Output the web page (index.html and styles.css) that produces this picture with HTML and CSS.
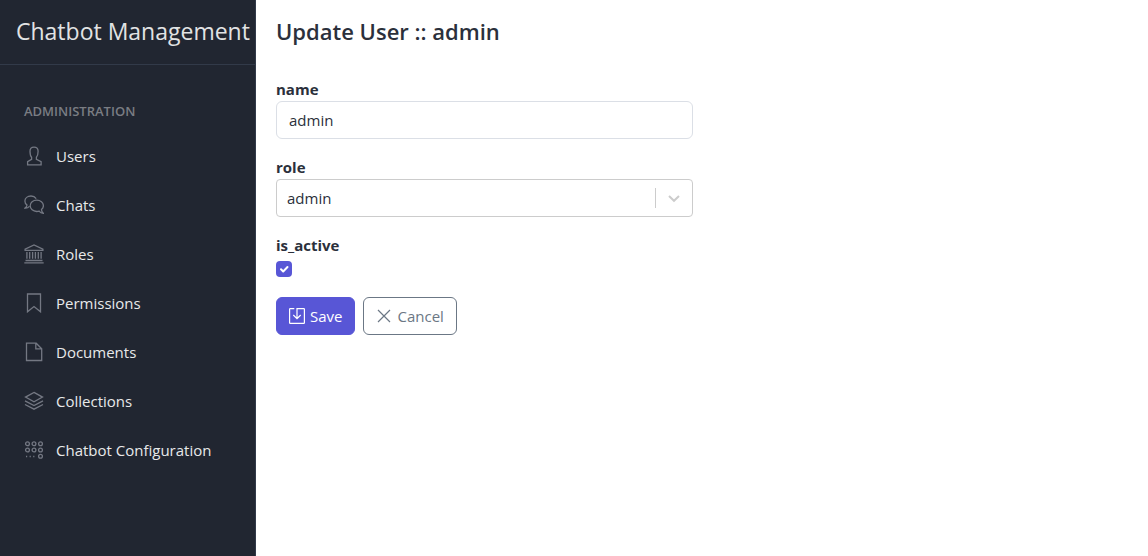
FILE: index.html
```html
<!DOCTYPE html>
<html lang="en">
<head>
<meta charset="utf-8">
<meta name="viewport" content="width=device-width, initial-scale=1">
<title>Update User</title>
<link rel="stylesheet" href="styles.css">
</head>
<body class="app">
<aside class="sidebar">
  <div class="brand">Chatbot Management</div>
  <nav class="nav">
    <h2 class="nav-title">Administration</h2>
    <a class="nav-link" href="#users"><svg class="icon" viewBox="0 0 20 20"><path d="M3.600 18.900v-3.200l4-2.300v-2.200C6.400 10 6 7.600 6 5.200 6 2.500 7.500 1.100 10 1.100s4.100 1.400 4.100 4.100c0 2.400-.5 4.800-1.700 6v2.200l4.700 2.300v3.200z"/></svg>Users</a>
    <a class="nav-link" href="#chats"><svg class="icon" viewBox="0 0 20 20"><path d="M12.200 3.600C11 1.900 9.200 1 7 1 3.600 1 .9 3.100.9 6c0 1.700.8 3.100 2.100 4.100 0 1.200-.8 2.200-1.900 3 1.700.1 3.200-.5 4.300-1.700M12.700 5.200c-3.600 0-6.500 2.400-6.500 5.600s2.900 5.700 6.500 5.700c.9 0 1.700-.1 2.400-.4 1 1.400 2.500 2.200 4.200 2.200-1.200-1.100-1.900-2.400-1.800-3.700 1.200-1 1.900-2.300 1.900-3.800 0-3.200-3-5.600-6.700-5.600z"/></svg>Chats</a>
    <a class="nav-link" href="#roles"><svg class="icon" viewBox="0 0 20 20"><path d="M1.100 6.300V5.200L10 1l8.900 4.200v1.100zM1.500 16.500h17M.3 18.900h19.400M2.900 8v6.800M5.700 8v6.800M8.600 8v6.800M11.400 8v6.800M14.300 8v6.800M17.100 8v6.800"/></svg>Roles</a>
    <a class="nav-link" href="#permissions"><svg class="icon" viewBox="0 0 20 20"><path d="M3.500 1h13v17.800L10 13.500l-6.500 5.300z"/></svg>Permissions</a>
    <a class="nav-link" href="#documents"><svg class="icon" viewBox="0 0 20 20"><path d="M2.500 1.200h9.700l5.500 5.500v11.800H2.500zM11.800 1.200v5.700h5.900"/></svg>Documents</a>
    <a class="nav-link" href="#collections"><svg class="icon" viewBox="0 0 20 20"><path d="M10 1.400l8.500 4.700L10 10.800 1.500 6.100zM1 9.800l9 4.700 9-4.700M1 13.500l9 4.700 9-4.700"/></svg>Collections</a>
    <a class="nav-link" href="#configuration"><svg class="icon" viewBox="0 0 20 20"><g><circle cx="3.500" cy="3.700" r="1.900"/><circle cx="10" cy="3.700" r="1.900"/><circle cx="16.500" cy="3.700" r="1.900"/><circle cx="3.500" cy="10" r="1.900"/><circle cx="10" cy="10" r="1.900"/><circle cx="16.500" cy="10" r="1.900"/><circle cx="16.500" cy="16.300" r="1.900"/></g><path d="M2 16.500h1.200M5.600 16.500h1.200M9.200 16.500h1.200"/></svg>Chatbot Configuration</a>
  </nav>
</aside>
<main class="main">
  <h1 class="title">Update User :: admin</h1>
  <form class="form">
    <div class="field">
      <label class="label" for="name">name</label>
      <input class="control" id="name" type="text" value="admin">
    </div>
    <div class="field">
      <label class="label" for="role">role</label>
      <div class="select-wrap">
        <select class="control select" id="role"><option>admin</option></select>
        <svg class="chevron" viewBox="0 0 38 20"><path class="divider" d="M.5 0v20"/><path class="arrow" d="M14 8l5 4.800L24 8"/></svg>
      </div>
    </div>
    <div class="field">
      <label class="label" for="active">is_active</label>
      <span class="check-wrap">
        <input class="check" id="active" type="checkbox" checked>
        <svg class="tick" viewBox="0 0 16 16"><path d="M5 8.300l2.200 2.200L11.500 6"/></svg>
      </span>
    </div>
    <div class="actions">
      <button class="btn btn-save" type="button"><svg class="btn-icon" viewBox="0 0 16 16"><path d="M5.300 .6H1.200Q.6 .6 .6 1.200v13.600q0 .6.600.6h13.600q.6 0 .6-.6V1.200q0-.6-.6-.6H8v10M4.300 7L8 10.700 11.700 7"/></svg>Save</button>
      <button class="btn btn-cancel" type="button"><svg class="btn-icon" viewBox="0 0 16 16"><path d="M2 2l12 12M14 2L2 14"/></svg>Cancel</button>
    </div>
  </form>
</main>
</body>
</html>
```
FILE: styles.css
```css
* { box-sizing: border-box; }
.app {
  margin: 0;
  min-height: 100vh;
  display: flex;
  font: 15px/24px "Segoe UI", "Open Sans", "Noto Sans", sans-serif;
  color: #2b303b;
  background: #fff;
}
.sidebar {
  flex: 0 0 256px;
  background: #212631;
  border-right: 1px solid #323a49;
  color: #e2e3e4;
}
.brand {
  padding: 16px 0 18px 16px;
  border-bottom: 1px solid #323a49;
  font-size: 23px;
  line-height: 30px;
  white-space: nowrap;
}
.nav {
  display: flex;
  flex-direction: column;
  gap: 1px;
  padding: 8px;
}
.nav-title {
  margin: 0;
  padding: 28px 16px 10px;
  font-size: 13px;
  line-height: 20px;
  font-weight: 600;
  text-transform: uppercase;
  color: #7a7d83;
}
.nav-link {
  display: flex;
  align-items: center;
  gap: 12px;
  padding: 12px 16px;
  color: #e8e9ea;
  text-decoration: none;
  white-space: nowrap;
}
.icon {
  width: 20px;
  height: 20px;
  fill: none;
  stroke: #747883;
  stroke-width: 1.3;
}
.main {
  flex: 1;
  min-width: 0;
  padding: 16px 14px 16px 20px;
}
.title {
  margin: 0 0 32px;
  font-size: 22px;
  line-height: 30px;
  font-weight: 600;
}
.form {
  display: flex;
  flex-direction: column;
  gap: 18px;
  width: calc(50% - 12px);
}
.field {
  display: flex;
  flex-direction: column;
}
.label {
  padding-bottom: 2px;
  font-weight: 700;
  line-height: 20px;
}
.title + .form { padding-top: 1px; }
.control {
  width: 100%;
  height: 38px;
  padding: 6px 12px;
  border: 1px solid #dbdfe6;
  border-radius: 6px;
  background: #fff;
  color: inherit;
  font: inherit;
}
.select-wrap { position: relative; }
.select {
  display: block;
  padding: 6px 10px;
  border-color: #ccc;
  border-radius: 4px;
  appearance: none;
}
.chevron {
  position: absolute;
  top: 9px;
  right: 0;
  width: 38px;
  height: 20px;
  fill: none;
  stroke: #ccc;
  pointer-events: none;
}
.divider { stroke-width: 1; }
.arrow { stroke-width: 2; }
.check-wrap {
  position: relative;
  width: 16px;
  height: 16px;
  margin: 4px 0 2px;
}
.check {
  display: block;
  width: 16px;
  height: 16px;
  margin: 0;
  border-radius: 4px;
  background: #5856d6;
  appearance: none;
}
.tick {
  position: absolute;
  inset: 0;
  fill: none;
  stroke: #fff;
  stroke-width: 2;
  stroke-linecap: round;
  stroke-linejoin: round;
  pointer-events: none;
}
.check:not(:checked) + .tick { display: none; }
.actions {
  display: flex;
  gap: 8px;
}
.btn {
  display: flex;
  align-items: center;
  gap: 5px;
  height: 38px;
  padding: 6px 12px;
  border: 1px solid #5856d6;
  border-radius: 6px;
  font: inherit;
}
.btn-save {
  background: #5856d6;
  color: #fff;
}
.btn-cancel {
  border-color: #6b7785;
  background: #fff;
  color: #6b7785;
}
.btn-icon {
  width: 16px;
  height: 16px;
  fill: none;
  stroke: currentColor;
  stroke-width: 1.2;
}
```
